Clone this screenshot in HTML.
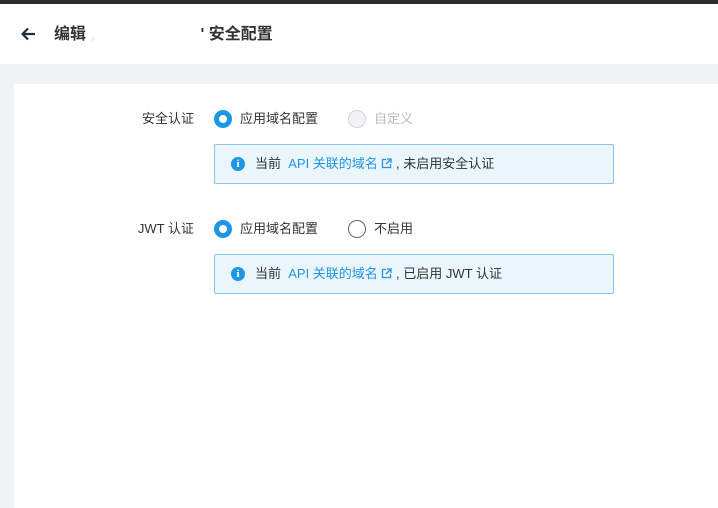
<!DOCTYPE html>
<html><head><meta charset="utf-8"><style>
*{margin:0;padding:0;box-sizing:border-box}
body{width:718px;height:508px;overflow:hidden;background:#f0f2f5;font-family:"Liberation Sans","Noto Sans CJK SC",sans-serif;font-size:13px;color:#333}
.top{height:4px;background:#2b2d31}
.hd{height:60px;background:#fff;position:relative}
.hd .t{position:absolute;left:54px;top:16px;font-size:16px;font-weight:bold;color:#333;white-space:nowrap}
.card{position:absolute;left:14px;top:84px;right:0;bottom:0;background:#fff}
.lab{position:absolute;width:180px;text-align:right;font-size:13px;color:#333}
.radio{position:absolute;width:18px;height:18px;border-radius:50%}
.on{border:5px solid #1e96e6;background:#fff}
.off{border:1px solid #666;background:#fff}
.dis{border:1px solid #d0d3d8;background:#f1f2f4}
.rt{position:absolute;font-size:13px}
.box{position:absolute;left:214px;width:400px;height:40px;border:1px solid #89c4ee;background:#ebf5fc;border-radius:2px;font-size:13px}
.box .i{position:absolute;left:16px;top:12px;width:14px;height:14px;border-radius:50%;background:#1e96e6;color:#fff;font-size:11px;font-weight:bold;text-align:center;line-height:14px;font-family:"Liberation Serif",serif}
.box .x{position:absolute;left:40px;top:8px;white-space:nowrap}
.lk{color:#1e96e6}
</style></head><body>
<div class="top"></div>
<div class="hd">
<svg style="position:absolute;left:21px;top:23px" width="15" height="14" viewBox="0 0 15 14"><path d="M14 7H2M7 1.5L1.5 7 7 12.5" stroke="#1f2d3d" stroke-width="2.2" fill="none"/></svg>
<div class="t">编辑 <span style="color:#ddd;font-weight:normal;display:inline-block;width:110px">,</span>'&nbsp;安全配置</div>
</div>
<div class="lab" style="left:14px;top:108px">安全认证</div>
<div class="radio on" style="left:214px;top:110px"></div>
<div class="rt" style="left:240px;top:108px">应用域名配置</div>
<div class="radio dis" style="left:348px;top:110px"></div>
<div class="rt" style="left:374px;top:108px;color:#b8bcc2">自定义</div>
<div class="box" style="top:144px"><div class="i">i</div><div class="x">当前&nbsp; <span class="lk">API 关联的域名 <svg width="11" height="11" viewBox="0 0 11 11" style="vertical-align:-1px"><path d="M5 1.5H1.5v8h8V6M6 1h4v4M10 1L5 6" stroke="#1e96e6" stroke-width="1.3" fill="none"/></svg></span> , 未启用安全认证</div></div>
<div class="lab" style="left:14px;top:218px">JWT 认证</div>
<div class="radio on" style="left:214px;top:220px"></div>
<div class="rt" style="left:240px;top:218px">应用域名配置</div>
<div class="radio off" style="left:348px;top:220px"></div>
<div class="rt" style="left:374px;top:218px">不启用</div>
<div class="box" style="top:254px"><div class="i">i</div><div class="x">当前&nbsp; <span class="lk">API 关联的域名 <svg width="11" height="11" viewBox="0 0 11 11" style="vertical-align:-1px"><path d="M5 1.5H1.5v8h8V6M6 1h4v4M10 1L5 6" stroke="#1e96e6" stroke-width="1.3" fill="none"/></svg></span> , 已启用 JWT 认证</div></div>
<div class="card" style="z-index:-1"></div>
</body></html>
